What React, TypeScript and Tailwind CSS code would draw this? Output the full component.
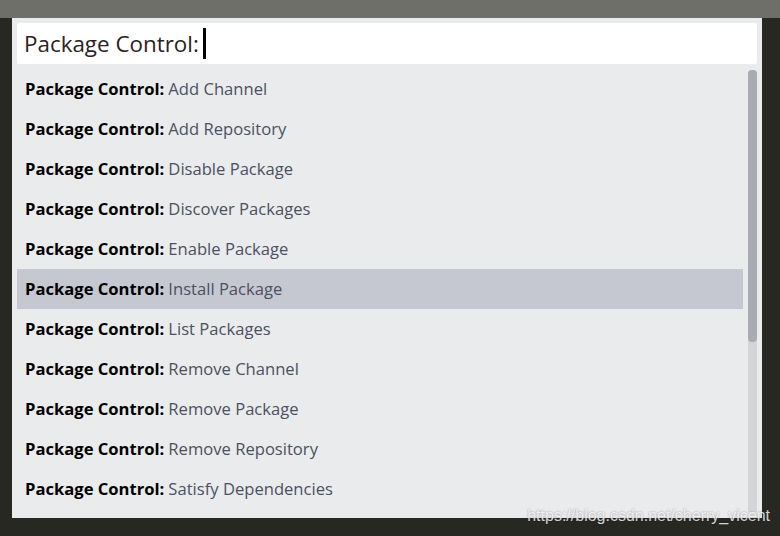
const items = [
  'Add Channel',
  'Add Repository',
  'Disable Package',
  'Discover Packages',
  'Enable Package',
  'Install Package',
  'List Packages',
  'Remove Channel',
  'Remove Package',
  'Remove Repository',
  'Satisfy Dependencies',
]

export default function App() {
  return (
    <div
      className="relative flex h-[536px] w-[780px] flex-col overflow-hidden bg-[#282823]"
      style={{ fontFamily: '"Open Sans", "Noto Sans", sans-serif' }}
    >
      <div className="h-[18px] shrink-0 bg-[#6f6f6a]" />
      <div className="flex">
        <div className="w-[12px] shrink-0" />
        <div className="flex h-[500px] w-[750px] flex-col gap-[5px] bg-[#eaebed] p-[5px] pb-0">
          <div className="flex h-[41px] shrink-0 items-center rounded-[2px] bg-white pl-[7px]">
            <span className="text-[22.4px] text-[#2b2222]">Package Control:</span>
            <span className="ml-[4px] h-[31px] w-[3px] bg-black" />
          </div>
          <div className="flex min-h-0 flex-1 gap-[5px] overflow-hidden">
            <div className="flex w-[726px] flex-col">
              {items.map((item) => (
                <div
                  key={item}
                  className={
                    'flex h-[40px] shrink-0 items-center pl-[8px] text-[16.6px] ' +
                    (item === 'Install Package' ? 'bg-[#c5c8d0]' : '')
                  }
                >
                  <span className="font-bold text-black">Package Control:</span>
                  <span className="ml-[4px] text-[#4b5161]">{item}</span>
                </div>
              ))}
            </div>
            <div className="mt-[1px] mb-[6px] flex w-[9px] flex-col overflow-hidden rounded-t-[4px] bg-[#d4d5d9]">
              <div className="h-[272px] rounded-b-[4px] bg-[#a9abb3]" />
            </div>
          </div>
        </div>
      </div>
      <div
        className="absolute right-[10px] top-[504px] text-[16px] text-white/80"
        style={{ fontFamily: '"Liberation Sans", Arial, sans-serif', textShadow: '0 0 2px rgba(0,0,0,0.4)' }}
      >
        https://blog.csdn.net/cherry_vicent
      </div>
    </div>
  )
}
